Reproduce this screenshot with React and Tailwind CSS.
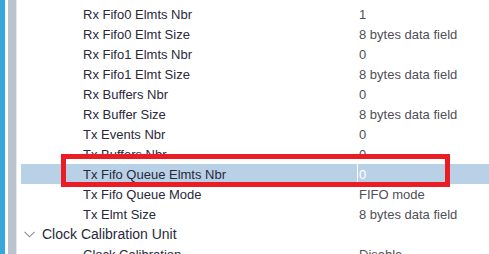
import React from "react";

const rows = [
  ["Rx Fifo0 Elmts Nbr", "1"],
  ["Rx Fifo0 Elmt Size", "8 bytes data field"],
  ["Rx Fifo1 Elmts Nbr", "0"],
  ["Rx Fifo1 Elmt Size", "8 bytes data field"],
  ["Rx Buffers Nbr", "0"],
  ["Rx Buffer Size", "8 bytes data field"],
  ["Tx Events Nbr", "0"],
  ["Tx Buffers Nbr", "0"],
  ["Tx Fifo Queue Elmts Nbr", "0", true],
  ["Tx Fifo Queue Mode", "FIFO mode"],
  ["Tx Elmt Size", "8 bytes data field"],
];

function Row({ label, value, sel }) {
  return (
    <div className={`flex h-[20px] items-center ${sel ? "bg-[#b9d1e7]" : ""}`}>
      <div className="w-[336px] shrink-0 pl-[62px] text-[#29293a]">{label}</div>
      <div className={`h-full w-px shrink-0 ${sel ? "bg-white" : ""}`} />
      <div className={`flex-1 pl-[1px] ${sel ? "text-white" : "text-[#4f4f57]"}`}>{value}</div>
    </div>
  );
}

export default function App() {
  return (
    <div
      className="relative flex h-[254px] w-[489px] overflow-hidden bg-white text-[13px] leading-none"
      style={{ fontFamily: '"Liberation Sans", Arial, sans-serif' }}
    >
      <div className="w-[5px] shrink-0 bg-[#36a6dc]" />
      <div className="w-[3px] shrink-0 bg-white" />
      <div className="w-[8px] shrink-0 bg-[#b9c4cc]" />
      <div className="w-[1px] shrink-0 bg-[#e6e9ec]" />
      <div className="flex-1 pl-[4px] pt-[4px]">
        {rows.map(([l, v, s]) => (
          <Row key={l} label={l} value={v} sel={s} />
        ))}
        <div className="flex h-[20px] items-center">
          <svg width="11" height="7" viewBox="0 0 11 7" className="ml-[3px] mr-[7px]">
            <path d="M0.5 0.8 L5.5 5.8 L10.5 0.8" fill="none" stroke="#8a8f96" strokeWidth="1.1" />
          </svg>
          <span className="text-[14px] text-[#29293a]">Clock Calibration Unit</span>
        </div>
        <div className="flex h-[20px] items-center">
          <div className="w-[336px] shrink-0 pl-[62px] text-[#29293a]">Clock Calibration</div>
          <div className="w-px shrink-0" />
          <div className="flex-1 pl-[1px] text-[#4f4f57]">Disable</div>
        </div>
      </div>
      <div className="pointer-events-none absolute left-[61px] top-[154px] h-[33px] w-[389px] border-[5px] border-[#ea1c24]" />
    </div>
  );
}
